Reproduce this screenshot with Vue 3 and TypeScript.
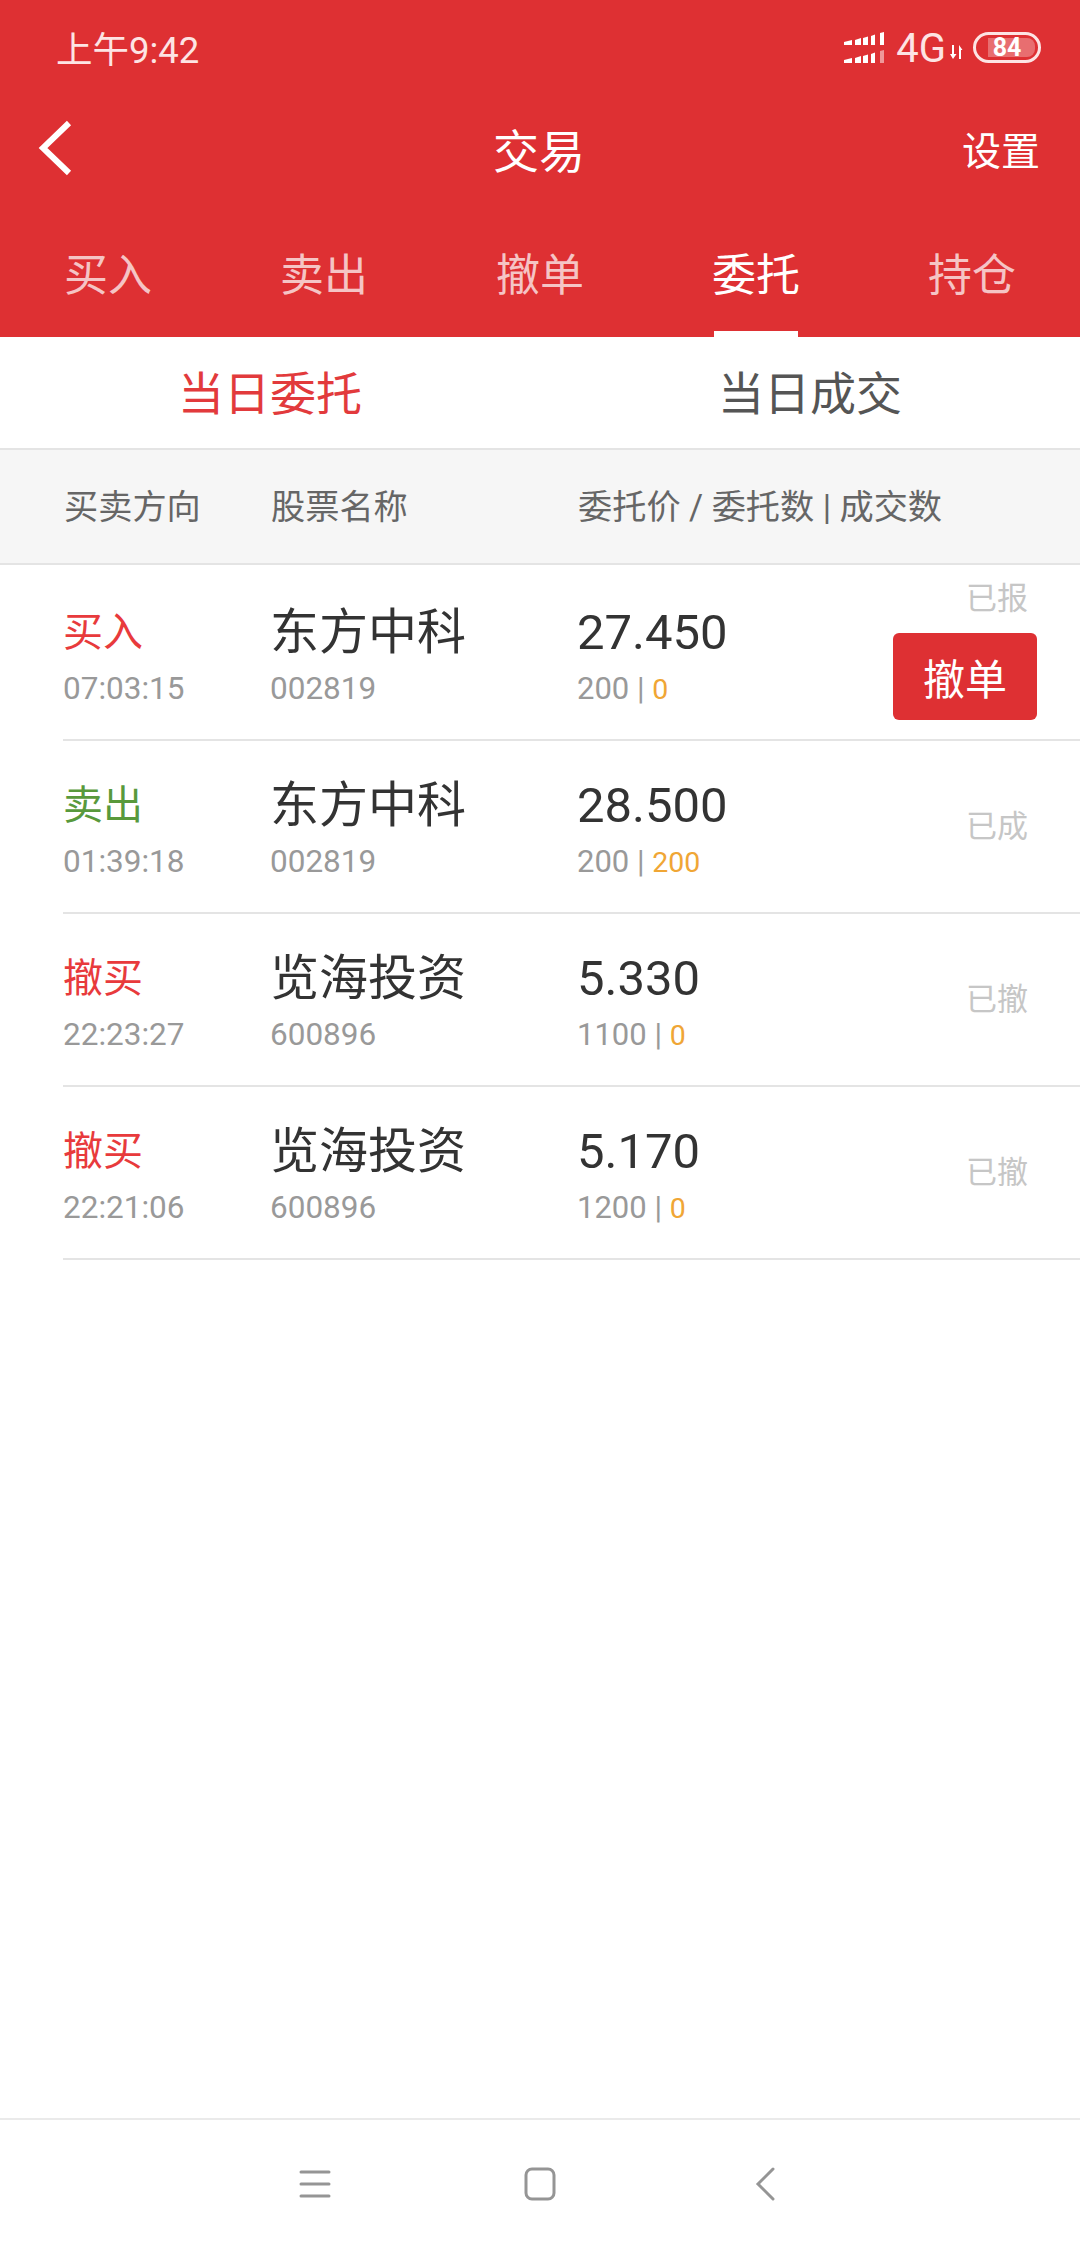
<template>
  <div class="page">
    <header class="top">
      <div class="status-bar">
        <span class="clock">上午9:42</span>
        <div class="status-icons">
          <svg class="signal" width="40" height="31" viewBox="0 0 40 31">
            <g fill="#fff">
              <path d="M0 10l8-2v5H0zM11 8l6-2v7h-6zM19 6l5-1.500V13h-5zM27 4l4-1.500V13h-4zM36 1l4-1v13h-4z" />
              <path d="M0 28l8-2v5H0zM11 26l6-2v7h-6zM19 24l5-1.500V31h-5zM27 22l4-1.500V31h-4z" />
              <path d="M36 19l4-1v13h-4z" opacity="0.5" />
            </g>
          </svg>
          <span class="net">4G</span>
          <svg class="arrows" width="13" height="14" viewBox="0 0 13 14">
            <path d="M2 0h2v9h2.500L3 14 0 9h2zM9 0l3.500 5H11v9H9z" fill="#fff" />
          </svg>
          <div class="battery">
            <span class="battery-fill"></span>
            <span class="battery-num">84</span>
          </div>
        </div>
      </div>

      <div class="nav">
        <svg class="back" width="34" height="56" viewBox="0 0 34 56">
          <path d="M31 3L5 28l26 25" fill="none" stroke="#fff" stroke-width="6" />
        </svg>
        <span class="title">交易</span>
        <span class="setting">设置</span>
      </div>

      <div class="tabs">
        <div v-for="t in tabs" :key="t" class="tab" :class="{ active: t === activeTab }">
          {{ t }}
        </div>
      </div>
    </header>

    <div class="sub-tabs">
      <div class="sub-tab on">当日委托</div>
      <div class="sub-tab">当日成交</div>
    </div>

    <div class="table-head">
      <span>买卖方向</span>
      <span>股票名称</span>
      <span>委托价 / 委托数 | 成交数</span>
    </div>

    <main class="list">
      <div v-for="o in orders" :key="o.time" class="row" :class="{ first: o.cancel }">
        <div class="cell">
          <div class="side" :class="o.side === '卖出' ? 'sell' : 'buy'">{{ o.side }}</div>
          <div class="sub">{{ o.time }}</div>
        </div>
        <div class="cell">
          <div class="name">{{ o.name }}</div>
          <div class="sub">{{ o.code }}</div>
        </div>
        <div class="cell">
          <div class="price">{{ o.price }}</div>
          <div class="sub qty">{{ o.qty }} <i>|</i> <em>{{ o.done }}</em></div>
        </div>
        <div class="state">
          <span class="state-text">{{ o.state }}</span>
          <button v-if="o.cancel" class="cancel">撤单</button>
        </div>
      </div>
    </main>

    <footer class="sys-nav">
      <div class="sys-btn">
        <svg width="32" height="28" viewBox="0 0 32 28">
          <path d="M2 2h28M2 14h28M2 26h28" stroke="#959595" stroke-width="3" stroke-linecap="round" />
        </svg>
      </div>
      <div class="sys-btn">
        <svg width="32" height="34" viewBox="0 0 32 34">
          <rect x="2" y="2" width="28" height="30" rx="6" fill="none" stroke="#959595" stroke-width="3" />
        </svg>
      </div>
      <div class="sys-btn">
        <svg width="20" height="34" viewBox="0 0 20 34">
          <path d="M18 2L3 17l15 15" fill="none" stroke="#959595" stroke-width="3" stroke-linecap="round" />
        </svg>
      </div>
    </footer>
  </div>
</template>

<script setup lang="ts">
interface Order {
  side: string;
  time: string;
  name: string;
  code: string;
  price: string;
  qty: string;
  done: string;
  state: string;
  cancel?: boolean;
}

const tabs = ['买入', '卖出', '撤单', '委托', '持仓'];
const activeTab = '委托';

const orders: Order[] = [
  { side: '买入', time: '07:03:15', name: '东方中科', code: '002819', price: '27.450', qty: '200', done: '0', state: '已报', cancel: true },
  { side: '卖出', time: '01:39:18', name: '东方中科', code: '002819', price: '28.500', qty: '200', done: '200', state: '已成' },
  { side: '撤买', time: '22:23:27', name: '览海投资', code: '600896', price: '5.330', qty: '1100', done: '0', state: '已撤' },
  { side: '撤买', time: '22:21:06', name: '览海投资', code: '600896', price: '5.170', qty: '1200', done: '0', state: '已撤' }
];
</script>

<style>
html,
body {
  margin: 0;
  background: #fff;
}
</style>

<style scoped>
.page {
  width: 1080px;
  height: 2248px;
  display: flex;
  flex-direction: column;
  font-family: Roboto, "Noto Sans CJK SC", sans-serif;
  color: #333;
}

.top {
  background: #de3033;
  color: #fff;
}

.status-bar {
  height: 96px;
  display: flex;
  align-items: center;
  justify-content: space-between;
  padding: 0 39px 2px 56px;
  box-sizing: border-box;
}

.clock {
  font-size: 36.500px;
  color: #fde4e4;
}

.status-icons {
  display: flex;
  align-items: center;
}

.net {
  font-size: 40px;
  margin-left: 12px;
  padding-top: 2px;
  color: #fde4e4;
}

.arrows {
  margin: 10px 10px 0 4px;
}

.battery {
  position: relative;
  width: 68px;
  height: 31px;
  box-sizing: border-box;
  border: 3px solid #fde4e4;
  border-radius: 16px;
  display: flex;
  align-items: center;
  justify-content: center;
}

.battery-fill {
  position: absolute;
  left: 12px;
  top: 3px;
  bottom: 3px;
  width: 47px;
  border-radius: 0 8px 8px 0;
  background: rgba(255, 255, 255, 0.3);
}

.battery-num {
  position: relative;
  font-size: 25px;
  font-weight: 700;
  line-height: 25px;
}

.nav {
  height: 108px;
  display: grid;
  grid-template-columns: 1fr auto 1fr;
  align-items: center;
  padding: 0 40px 4px 38px;
  box-sizing: border-box;
}

.title {
  font-size: 46px;
}

.setting {
  font-size: 39px;
  justify-self: end;
}

.tabs {
  height: 133px;
  display: grid;
  grid-template-columns: repeat(5, 1fr);
}

.tab {
  position: relative;
  padding-top: 45px;
  text-align: center;
  font-size: 44px;
  line-height: 54px;
  color: rgba(255, 255, 255, 0.72);
}

.tab.active {
  color: #fff;
}

.tab.active::after {
  content: "";
  position: absolute;
  left: 66px;
  right: 66px;
  bottom: 0;
  height: 6px;
  background: #fff;
}

.sub-tabs {
  height: 113px;
  box-sizing: border-box;
  display: grid;
  grid-template-columns: 1fr 1fr;
  align-items: center;
  padding-bottom: 6px;
  border-bottom: 2px solid #e4e4e4;
  font-size: 46px;
  color: #555;
  text-align: center;
}

.sub-tab.on {
  color: #e23a3c;
}

.table-head {
  height: 115px;
  box-sizing: border-box;
  padding: 0 0 6px 64px;
  display: grid;
  grid-template-columns: 207px 307px 1fr;
  align-items: center;
  background: #f6f6f6;
  border-bottom: 2px solid #e4e4e4;
  font-size: 34.200px;
  color: #666;
}

.list {
  flex: 1;
}

.row {
  height: 173px;
  box-sizing: border-box;
  margin-left: 63px;
  display: grid;
  grid-template-columns: 207px 307px 1fr auto;
  border-bottom: 2px solid #e4e4e4;
}

.row.first {
  height: 176px;
}

.cell {
  padding-top: 37px;
}

.first .cell {
  padding-top: 40px;
}

.side {
  font-size: 40px;
  line-height: 56px;
}

.side.buy {
  color: #e83a3c;
}

.side.sell {
  color: #58993c;
}

.name {
  font-size: 49px;
  line-height: 56px;
}

.price {
  font-size: 49px;
  line-height: 56px;
}

.sub {
  margin-top: 8px;
  font-size: 31.500px;
  line-height: 40px;
  color: #999;
}

.sub.qty {
  font-size: 31px;
}

.sub i {
  font-style: normal;
}

.sub em {
  font-style: normal;
  font-size: 28.500px;
  color: #f0a635;
}

.state {
  display: flex;
  flex-direction: column;
  align-items: flex-end;
  justify-content: center;
  padding-right: 43px;
}

.first .state {
  justify-content: flex-start;
  padding-top: 14px;
}

.state-text {
  margin-right: 9px;
  font-size: 31px;
  line-height: 40px;
  color: #c6c6c6;
}

.cancel {
  margin-top: 14px;
  width: 144px;
  height: 87px;
  padding: 0;
  border: 0;
  border-radius: 6px;
  background: #de3033;
  color: #fff;
  font-family: inherit;
  font-size: 42px;
}

.sys-nav {
  height: 130px;
  box-sizing: border-box;
  display: flex;
  justify-content: center;
  align-items: center;
  border-top: 2px solid #eaeaea;
}

.sys-btn {
  width: 225px;
  display: flex;
  justify-content: center;
}
</style>
